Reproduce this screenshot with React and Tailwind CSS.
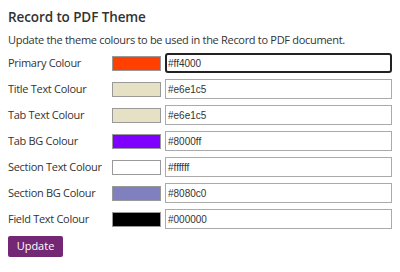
const rows = [
  { label: 'Primary Colour', value: '#ff4000', swatch: 'bg-[#ff4000]', focused: true },
  { label: 'Title Text Colour', value: '#e6e1c5', swatch: 'bg-[#e6e1c5]' },
  { label: 'Tab Text Colour', value: '#e6e1c5', swatch: 'bg-[#e6e1c5]' },
  { label: 'Tab BG Colour', value: '#8000ff', swatch: 'bg-[#8000ff]' },
  { label: 'Section Text Colour', value: '#ffffff', swatch: 'bg-[#ffffff]' },
  { label: 'Section BG Colour', value: '#8080c0', swatch: 'bg-[#8080c0]' },
  { label: 'Field Text Colour', value: '#000000', swatch: 'bg-[#000000]' },
];

export default function App() {
  return (
    <div className="h-[272px] w-[400px] bg-white px-2 pt-[7px] text-[#333] [font-family:'Open_Sans',sans-serif]">
      <h1 className="text-[13.5px] font-semibold leading-[20px] tracking-[-0.1px]">Record to PDF Theme</h1>
      <p className="mt-[4px] whitespace-nowrap text-[11px] leading-[17px] tracking-[-0.3px]">
        Update the theme colours to be used in the Record to PDF document.
      </p>

      <div className="mt-[5px] flex flex-col gap-[6px]">
        {rows.map((row) => (
          <div key={row.label} className="flex h-5 items-center">
            <span className="w-[104px] shrink-0 whitespace-nowrap text-[11px] leading-5 tracking-[-0.3px]">
              {row.label}
            </span>
            <div className={`h-[15px] w-[49px] shrink-0 border border-[#999] ${row.swatch}`} />
            <div
              className={
                row.focused
                  ? 'ml-1 flex h-5 w-[228px] items-center rounded-[3px] border-2 border-[#222] px-[1px]'
                  : 'ml-1 flex h-5 w-[228px] items-center border border-[#aaa] px-[2px]'
              }
            >
              <span className="text-[10px] text-[#333] [font-family:'Liberation_Sans',sans-serif]">{row.value}</span>
            </div>
          </div>
        ))}
      </div>

      <button className="mt-[7px] h-[21px] w-[55px] rounded-[2px] bg-[#742774] text-[11px] text-white">
        Update
      </button>
    </div>
  );
}
